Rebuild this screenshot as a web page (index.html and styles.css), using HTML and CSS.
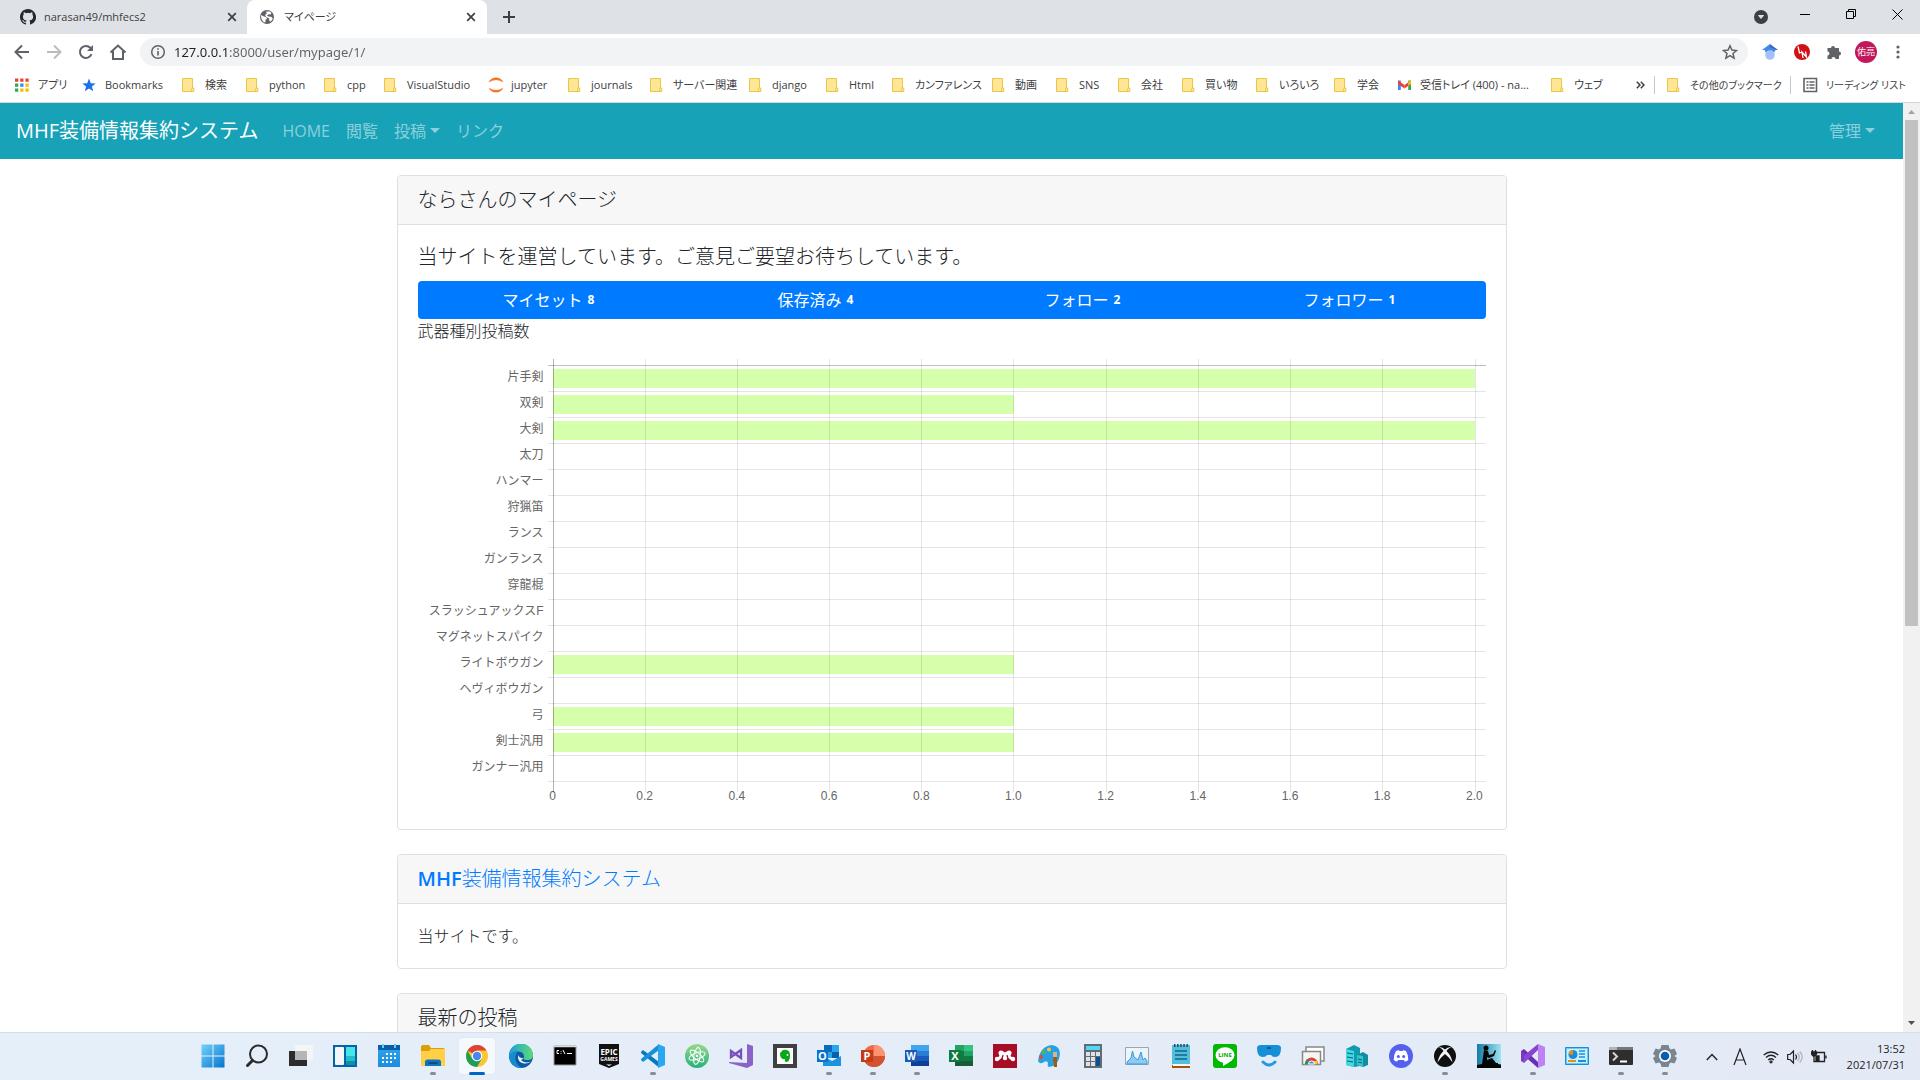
FILE: index.html
```html
<!DOCTYPE html>
<html lang="ja">
<head>
<meta charset="utf-8">
<title>マイページ</title>
<link rel="stylesheet" href="styles.css">
</head>
<body>
<svg class="defs" aria-hidden="true">
  <defs>
    <symbol id="folder" viewBox="0 0 16 16"><path d="M.5 1.500h10v9.500h1.300v3.500H.5z" fill="#ffe694" stroke="#e8c64a"/><path d="M9.500 14.500v-2q0-1.500 1.200-1.500" fill="none" stroke="#e8c64a"/></symbol>
    <symbol id="close" viewBox="0 0 10 10"><path d="M1.200 1.200l7.600 7.600M8.800 1.200L1.200 8.800" stroke="#3c4043" stroke-width="1.700"/></symbol>
    <linearGradient id="blue" x2="1" y2="1"><stop stop-color="#6fd3fb"/><stop offset="1" stop-color="#0873cf"/></linearGradient>
    <linearGradient id="sky" x2="0" y2="1"><stop stop-color="#2fa6ec"/><stop offset="1" stop-color="#1a8ddd"/></linearGradient>
    <linearGradient id="edge" x2="1" y2="0"><stop stop-color="#1b9de2"/><stop offset="1" stop-color="#5fdc6e"/></linearGradient>
    <linearGradient id="kindle" x2="1"><stop stop-color="#167ba6"/><stop offset="1" stop-color="#9fe3f4"/></linearGradient>
    <linearGradient id="atom" x2="0" y2="1"><stop stop-color="#9bd88c"/><stop offset="1" stop-color="#25b07a"/></linearGradient>
  </defs>
</svg>

<header class="browser">
  <div class="tabs">
    <div class="tab">
      <svg width="16" height="16" viewBox="0 0 16 16"><path fill="#24292e" d="M8 0C3.580 0 0 3.580 0 8c0 3.540 2.290 6.530 5.470 7.590.4.070.55-.17.55-.38v-1.490c-2.010.37-2.530-.49-2.690-.94-.09-.23-.48-.94-.82-1.130-.28-.15-.68-.52-.01-.53.63-.01 1.080.58 1.230.82.72 1.210 1.870.87 2.330.66.07-.52.28-.87.51-1.070-1.780-.2-3.640-.89-3.640-3.950 0-.87.31-1.590.82-2.150-.08-.2-.36-1.020.08-2.120 0 0 .67-.21 2.200.82a7.600 7.600 0 0 1 4 0c1.530-1.040 2.200-.82 2.200-.82.44 1.100.16 1.920.08 2.120.51.56.82 1.270.82 2.150 0 3.070-1.870 3.750-3.650 3.950.29.25.54.73.54 1.480v2.200c0 .21.15.46.55.38A8 8 0 0 0 8 0z"/></svg>
      <span class="tab-title">narasan49/mhfecs2</span>
      <button class="tab-close" aria-label="タブを閉じる"><svg width="10" height="10"><use href="#close"/></svg></button>
    </div>
    <div class="tab active">
      <svg width="14" height="14" viewBox="0 0 14 14"><circle cx="7" cy="7" r="7" fill="#5f6368"/><path d="M1 5l3 1.500 2 .5 1 1.500-1.500 1.500V12L4 12.500Q.8 10 1 5zM6 1.500h4l1.500 1.500-1 1.500-2-.3-1.500 1.300 1.500 1 2.500.3 1.800 1.500-.6 1.500-1.700 2-1.500-1.500.3-1.800-3-1.500L5 5l1.800-1.500z" fill="#fff"/></svg>
      <span class="tab-title">マイページ</span>
      <button class="tab-close" aria-label="タブを閉じる"><svg width="10" height="10"><use href="#close"/></svg></button>
    </div>
    <button class="new-tab" aria-label="新しいタブ"><svg width="12" height="12" viewBox="0 0 12 12"><path d="M6 0v12M0 6h12" stroke="#3c4043" stroke-width="2"/></svg></button>
    <div class="window-controls">
      <button class="search-tabs" aria-label="タブを検索"><svg width="14" height="14" viewBox="0 0 14 14"><circle cx="7" cy="7" r="7" fill="#3c4043"/><path d="M4.500 5.500h5L7 8.500z" fill="#dee1e6" stroke="#dee1e6"/></svg></button>
      <button aria-label="最小化"><svg width="10" height="10" viewBox="0 0 10 10"><path d="M0 5.500h10" stroke="#000"/></svg></button>
      <button aria-label="元に戻す"><svg width="10" height="10" viewBox="0 0 10 10" fill="none" stroke="#000"><path d="M.5 2.500h7v7h-7zM2.500 2.500v-2h7v7h-2"/></svg></button>
      <button aria-label="閉じる"><svg width="11" height="11" viewBox="0 0 11 11"><path d="M.5.5l10 10M10.500.5l-10 10" stroke="#000"/></svg></button>
    </div>
  </div>

  <div class="toolbar">
    <button aria-label="戻る"><svg width="16" height="16" viewBox="0 0 16 16" fill="none" stroke="#5f6368" stroke-width="2"><path d="M15 8H2.500M8 1.500L1.500 8 8 14.500"/></svg></button>
    <button aria-label="進む"><svg width="16" height="16" viewBox="0 0 16 16" fill="none" stroke="#babcbe" stroke-width="2"><path d="M1 8h12.500M8 1.500L14.500 8 8 14.500"/></svg></button>
    <button aria-label="再読み込み"><svg width="16" height="16" viewBox="0 0 16 16"><path d="M13.500 10.200A6 6 0 1 1 12.300 3.800L14 5.500" fill="none" stroke="#5f6368" stroke-width="2"/><path d="M15 1v6H9z" fill="#5f6368"/></svg></button>
    <button aria-label="ホーム"><svg width="18" height="16" viewBox="0 0 18 16"><path d="M1.500 8.500L9 1.500l7.500 7M4 7v8h10V7" fill="none" stroke="#5f6368" stroke-width="2"/></svg></button>
    <div class="omnibox">
      <svg width="16" height="16" viewBox="0 0 16 16"><circle cx="8" cy="8" r="6.300" fill="none" stroke="#5f6368" stroke-width="1.500"/><path d="M8 7v4.500M8 4.200v1.600" stroke="#5f6368" stroke-width="1.600"/></svg>
      <input class="url" type="text" aria-label="アドレス" value="127.0.0.1:8000/user/mypage/1/">
      <button aria-label="ブックマークに追加"><svg width="16" height="16" viewBox="0 0 16 16"><path d="M8 1.800l1.900 4.300 4.600.4-3.500 3 1.100 4.600L8 11.700l-4.100 2.400L5 9.500l-3.500-3 4.600-.4z" fill="none" stroke="#5f6368" stroke-width="1.500"/></svg></button>
    </div>
    <div class="extensions">
      <button aria-label="Google Scholar"><svg width="16" height="16" viewBox="0 0 16 16"><path d="M8 0L0 6h2.500L8 5z" fill="#4285f4"/><path d="M8 0l8 6h-2.500L8 5z" fill="#356ac3"/><path d="M2.500 6Q8 1 13.500 6L12 9H4z" fill="#4a86e8"/><circle cx="8" cy="11" r="4.800" fill="#a0c3ff"/></svg></button>
      <button aria-label="拡張機能 LN"><svg width="16" height="16" viewBox="0 0 16 16"><circle cx="8" cy="8" r="8" fill="#d01216"/><path d="M4 2.500L5.500 9 8.500 8M9 14L8 8l4.500 5-1-5.500" fill="none" stroke="#fff" stroke-width="1.300"/></svg></button>
      <button aria-label="拡張機能"><svg width="16" height="16" viewBox="0 0 16 16"><path d="M1.500 4H5a2 2 0 1 1 4 0h4v3.500a2 2 0 1 1 0 4V15H9.500a2 2 0 0 0-4 0h-4v-3.500a2 2 0 0 0 0-4z" fill="#5f6368"/></svg></button>
      <button class="avatar" aria-label="プロフィール"><span>佑亮</span></button>
      <button aria-label="メニュー"><svg width="4" height="14" viewBox="0 0 4 14" fill="#5f6368"><circle cx="2" cy="2" r="1.600"/><circle cx="2" cy="7" r="1.600"/><circle cx="2" cy="12" r="1.600"/></svg></button>
    </div>
  </div>

  <nav class="bookmarks" aria-label="ブックマーク">
    <div class="bookmark-list">
      <a href="#"><svg viewBox="0 0 16 16"><path d="M0 1.500h3.300v3.300H0zM5.200 1.500h3.300v3.300H5.200zM10.400 1.500h3.300v3.300h-3.300z" fill="#ea4335"/><path d="M0 6.500h3.300v3.300H0zM0 11.500h3.300v3.300H0z" fill="#34a853"/><path d="M5.200 6.500h3.300v3.300H5.200z" fill="#4285f4"/><path d="M10.400 6.500h3.300v3.300h-3.300zM5.200 11.500h3.300v3.300H5.200zM10.400 11.500h3.300v3.300h-3.300z" fill="#fbbc05"/></svg>アプリ</a>
      <a href="#"><svg viewBox="0 0 16 16"><path d="M7 1.500l1.800 4.700 4.900.2-3.800 3.100 1.300 4.800L7 11.600l-4.200 2.700 1.300-4.800L.3 6.400l4.900-.2z" fill="#1a73e8"/></svg>Bookmarks</a>
      <a href="#"><svg><use href="#folder"/></svg>検索</a>
      <a href="#"><svg><use href="#folder"/></svg>python</a>
      <a href="#"><svg><use href="#folder"/></svg>cpp</a>
      <a href="#"><svg><use href="#folder"/></svg>VisualStudio</a>
      <a href="#"><svg viewBox="0 0 16 16" fill="#f37726"><path d="M.5 5.500Q3 .5 8 .5t7.500 5Q12 3 8 3T.5 5.500zM.5 10.500Q4 13 8 13t7.500-2.500q-2.500 5-7.500 5t-7.500-5z"/></svg>jupyter</a>
      <a href="#"><svg><use href="#folder"/></svg>journals</a>
      <a href="#"><svg><use href="#folder"/></svg>サーバー関連</a>
      <a href="#"><svg><use href="#folder"/></svg>django</a>
      <a href="#"><svg><use href="#folder"/></svg>Html</a>
      <a href="#"><svg><use href="#folder"/></svg>カンファレンス</a>
      <a href="#"><svg><use href="#folder"/></svg>動画</a>
      <a href="#"><svg><use href="#folder"/></svg>SNS</a>
      <a href="#"><svg><use href="#folder"/></svg>会社</a>
      <a href="#"><svg><use href="#folder"/></svg>買い物</a>
      <a href="#"><svg><use href="#folder"/></svg>いろいろ</a>
      <a href="#"><svg><use href="#folder"/></svg>学会</a>
      <a href="#"><svg viewBox="0 0 16 16"><path d="M1 3.500h2.800V13H1z" fill="#4285f4"/><path d="M11.200 3.500H14V13h-2.800z" fill="#34a853"/><path d="M1 3.500L7.500 8v3.500L1 7z" fill="#ea4335"/><path d="M14 3.500L7.500 8v3.500L14 7z" fill="#ea4335"/><path d="M11.200 5V9L14 7V3.500z" fill="#fbbc05"/></svg>受信トレイ (400) - na...</a>
      <a href="#"><svg><use href="#folder"/></svg>ウェブ</a>
    </div>
    <div class="bookmark-end">
      <button class="more" aria-label="その他を表示"><svg width="9" height="8" viewBox="0 0 9 8"><path d="M.8.8L4 4 .8 7.200M4.800.8L8 4 4.800 7.200" fill="none" stroke="#3c4043" stroke-width="1.500"/></svg></button>
      <a href="#"><svg><use href="#folder"/></svg>その他のブックマーク</a>
      <a href="#"><svg viewBox="0 0 16 16"><path d="M1 1.500h12.500v13H1z" fill="none" stroke="#5f6368" stroke-width="1.600"/><path d="M3.500 5h2M3.500 8h2M3.500 11h2M6.500 5h5M6.500 8h5M6.500 11h5" stroke="#5f6368" stroke-width="1.400"/></svg>リーディング リスト</a>
    </div>
  </nav>
</header>

<div class="viewport">
  <div class="page">
    <nav class="navbar">
      <a class="brand" href="#">MHF装備情報集約システム</a>
      <a class="nav-link" href="#">HOME</a>
      <a class="nav-link" href="#">閲覧</a>
      <a class="nav-link caret" href="#">投稿</a>
      <a class="nav-link" href="#">リンク</a>
      <a class="nav-link caret admin" href="#">管理</a>
    </nav>
    <main class="container">
      <section class="card">
        <h5 class="card-header">ならさんのマイページ</h5>
        <div class="card-body">
          <h5 class="card-title">当サイトを運営しています。ご意見ご要望お待ちしています。</h5>
          <div class="btn-group">
            <button>マイセット <span class="badge">8</span></button>
            <button>保存済み <span class="badge">4</span></button>
            <button>フォロー <span class="badge">2</span></button>
            <button>フォロワー <span class="badge">1</span></button>
          </div>
          <div>武器種別投稿数</div>
          <div class="chart">
            <div class="labels">
              <span>片手剣</span><span>双剣</span><span>大剣</span><span>太刀</span><span>ハンマー</span><span>狩猟笛</span><span>ランス</span><span>ガンランス</span><span>穿龍棍</span><span>スラッシュアックスF</span><span>マグネットスパイク</span><span>ライトボウガン</span><span>ヘヴィボウガン</span><span>弓</span><span>剣士汎用</span><span>ガンナー汎用</span>
            </div>
            <div class="plot">
              <div class="row"><div class="track"><div class="bar" style="width:100%"></div></div></div>
              <div class="row"><div class="track"><div class="bar" style="width:50%"></div></div></div>
              <div class="row"><div class="track"><div class="bar" style="width:100%"></div></div></div>
              <div class="row"></div>
              <div class="row"></div>
              <div class="row"></div>
              <div class="row"></div>
              <div class="row"></div>
              <div class="row"></div>
              <div class="row"></div>
              <div class="row"></div>
              <div class="row"><div class="track"><div class="bar" style="width:50%"></div></div></div>
              <div class="row"></div>
              <div class="row"><div class="track"><div class="bar" style="width:50%"></div></div></div>
              <div class="row"><div class="track"><div class="bar" style="width:50%"></div></div></div>
              <div class="row"></div>
              <div class="gridlines"><i></i><i></i><i></i><i></i><i></i><i></i><i></i><i></i><i></i><i></i></div>
            </div>
            <div class="scale"><span>0</span><span>0.2</span><span>0.4</span><span>0.6</span><span>0.8</span><span>1.0</span><span>1.2</span><span>1.4</span><span>1.6</span><span>1.8</span><span>2.0</span></div>
          </div>
        </div>
      </section>
      <section class="card">
        <h5 class="card-header"><a href="#"><b>MHF</b>装備情報集約システム</a></h5>
        <div class="card-body">当サイトです。</div>
      </section>
      <section class="card">
        <h5 class="card-header">最新の投稿</h5>
        <div class="card-body"></div>
      </section>
    </main>
  </div>
  <div class="scrollbar">
    <svg width="17" height="17" viewBox="0 0 17 17"><path d="M5 11l3.500-4 3.500 4z" fill="#a3a3a3"/></svg>
    <div class="scroll-track"><div class="thumb"></div></div>
    <svg width="17" height="17" viewBox="0 0 17 17"><path d="M5 6l3.500 4L12 6z" fill="#505050"/></svg>
  </div>
</div>

<footer class="taskbar">
  <div class="apps">
    <button aria-label="スタート"><svg viewBox="0 0 24 24"><path d="M.5.5h11v11H.5zM12.500.5h11v11h-11zM.5 12.500h11v11H.5zM12.500 12.500h11v11h-11z" fill="url(#blue)"/></svg></button>
    <button aria-label="検索"><svg viewBox="0 0 24 24" fill="none" stroke="#2b2b2b"><circle cx="13.500" cy="10" r="8.500" stroke-width="2"/><path d="M7.500 16.500l-5 5" stroke-width="3" stroke-linecap="round"/></svg></button>
    <button aria-label="タスクビュー"><svg viewBox="0 0 24 24"><path d="M0 7h18v15H0z" fill="#2c2c2c"/><path d="M6 1h18v15H6z" fill="#f5f5f5"/><path d="M6 7h12v9H6z" fill="#b5b5b5"/></svg></button>
    <button aria-label="ウィジェット"><svg viewBox="0 0 24 24"><path d="M0 1h24v22H0z" fill="#0763a8"/><rect x="2" y="3" width="9" height="18" rx="1" fill="#f4f7fa"/><path d="M13 3h9v9h-9z" fill="#44e6e8"/><path d="M13 12h9v5h-9z" fill="#22bccb"/><path d="M13 17h9v4h-9z" fill="#108fa5"/></svg></button>
    <button aria-label="カレンダー"><svg viewBox="0 0 24 24"><path d="M1 2h22v21H1z" fill="url(#sky)"/><path d="M1 1h22v5H1z" fill="#0b5caa"/><path d="M5 0h2v4H5zM17 0h2v4h-2z" fill="#55d5f5"/><path d="M9 10h11M5 14h15M5 18h11" stroke="#fff" stroke-width="2" stroke-dasharray="2"/></svg></button>
    <button class="running" aria-label="エクスプローラー"><svg viewBox="0 0 24 24"><path d="M0 3q0-2 2-2h6l2 3h12q2 0 2 2v14H0z" fill="#dca000"/><path d="M0 7h8l2-2h14v17H0z" fill="#ffcf48"/><path d="M4 22v-4q0-2.500 2.500-2.500h11Q20 15.500 20 18v4z" fill="#1172bd"/><path d="M7.500 19h9" stroke="#0b4e84" stroke-width="2"/></svg></button>
    <button class="current" aria-label="Google Chrome"><svg viewBox="0 0 24 24"><circle cx="12" cy="12" r="11" fill="#fbc62f"/><path d="M12 12L2.500 6.500A11 11 0 0 1 21.500 6.500H12z" fill="#dc4437"/><path d="M2.500 6.500A11 11 0 0 0 12 23l4.800-8.300L7.300 14.700z" fill="#1d9e58"/><circle cx="12" cy="12" r="5.300" fill="#fff"/><circle cx="12" cy="12" r="4.200" fill="#4a86ee"/></svg></button>
    <button aria-label="Microsoft Edge"><svg viewBox="0 0 24 24"><circle cx="12" cy="12" r="12" fill="#0d59a4"/><path d="M0 12A12 12 0 0 1 24 11q0 5-5.500 5-4 0-4-1.500Q16 11 13 8.500 6 5.500 0 12z" fill="url(#edge)"/><path d="M0 12q4-5.500 9-4.500-3 3-2.500 7.500.5 6 6.500 9Q1 24 0 12z" fill="#168bd0"/><path d="M14.500 14.500Q10 14 9 11q-1 7 6 8.500 4 .5 7-2Q15 20 12 16z" fill="#eaf5fb"/></svg></button>
    <button aria-label="コマンドプロンプト"><svg viewBox="0 0 24 24"><path d="M1 2h22v19H1z" fill="#000" stroke="#9a9a9a"/><path d="M1 2.500h22" stroke="#ddd" stroke-width="1.500"/><path d="M6 6.500H4v3h2M8 7v.8M8 9v.8M10 6l2 4M14 9.500h5" fill="none" stroke="#fff"/></svg></button>
    <button aria-label="Epic Games"><svg viewBox="0 0 24 24"><path d="M2 0h20v20l-10 4-10-4z" fill="#111"/><text x="12" y="11" text-anchor="middle" class="icon-text" font-size="8" fill="#fff">EPIC</text><text x="12" y="17" text-anchor="middle" class="icon-text" font-size="5" fill="#fff">GAMES</text><path d="M9 20.500h6l-3 1.500z" fill="#fff"/></svg></button>
    <button class="running" aria-label="Visual Studio Code"><svg viewBox="0 0 24 24"><path d="M0 8l2-2 16 12v5.500L0 9z" fill="#0879be"/><path d="M0 16l2 2L18 6V0L0 15z" fill="#1492d8"/><path d="M17 0l7 3v18l-7 3z" fill="#2aa8ef"/></svg></button>
    <button aria-label="Atom"><svg viewBox="0 0 24 24"><circle cx="12" cy="12" r="12" fill="url(#atom)"/><g fill="none" stroke="#f3fff8" stroke-width="1.100"><ellipse cx="12" cy="12" rx="3.200" ry="8.500" transform="rotate(10 12 12)"/><ellipse cx="12" cy="12" rx="3.200" ry="8.500" transform="rotate(70 12 12)"/><ellipse cx="12" cy="12" rx="3.200" ry="8.500" transform="rotate(130 12 12)"/></g><circle cx="12" cy="12" r="1.300" fill="#fff"/></svg></button>
    <button aria-label="Visual Studio Installer"><svg viewBox="0 0 24 24"><path d="M18 0l6 2v19l-6 3-18-5v-1l18 1z" fill="#8a62c8"/><path d="M2 7l10 7V6L2 13z" fill="none" stroke="#7a4ebe" stroke-width="2.300"/></svg></button>
    <button aria-label="Evernote"><svg viewBox="0 0 24 24"><path d="M0 0h24v24H0z" fill="#404040"/><path d="M4 4h16v16H4z" fill="#fff"/><path d="M7 9l3-3q7-1 7 5t-3 7q-3 0-2-3-5 1-5-6z" fill="#0aa817"/><circle cx="14.500" cy="11" r=".9" fill="#fff"/></svg></button>
    <button class="running" aria-label="Outlook"><svg viewBox="0 0 24 24"><path d="M7 1h15v13H7z" fill="#28a8ea"/><path d="M7 1h8v7H7z" fill="#0d6ab8"/><path d="M15 8h7v6h-7z" fill="#0a5eaa"/><path d="M6 12l9 5 9-5v10H6z" fill="#1b94df"/><path d="M0 6h11v12H0z" fill="#0871c9"/><text x="5.500" y="16" text-anchor="middle" class="icon-text" font-size="11" fill="#fff">O</text></svg></button>
    <button class="running" aria-label="PowerPoint"><svg viewBox="0 0 24 24"><circle cx="13" cy="12" r="11" fill="#ec6b48"/><path d="M13 1a11 11 0 0 1 11 11H13z" fill="#ff9270"/><path d="M2 12h22a11 11 0 0 1-22 0z" fill="#d35230"/><path d="M0 6h12v12H0z" fill="#c13b1b"/><text x="6" y="16" text-anchor="middle" class="icon-text" font-size="11" fill="#fff">P</text></svg></button>
    <button class="running" aria-label="Word"><svg viewBox="0 0 24 24"><path d="M6 1h18v6H6z" fill="#41a5ee"/><path d="M6 7h18v5H6z" fill="#2b7cd3"/><path d="M6 12h18v5H6z" fill="#185abd"/><path d="M6 17h18v5H6z" fill="#103f91"/><path d="M0 6h12v12H0z" fill="#1a58ba"/><text x="6" y="16" text-anchor="middle" class="icon-text" font-size="10" fill="#fff">W</text></svg></button>
    <button aria-label="Excel"><svg viewBox="0 0 24 24"><path d="M6 1h9v6H6z" fill="#21a366"/><path d="M15 1h9v6h-9z" fill="#33c481"/><path d="M6 7h9v10H6z" fill="#107c41"/><path d="M15 7h9v5h-9z" fill="#21a366"/><path d="M15 12h9v5h-9z" fill="#107c41"/><path d="M6 17h18v5H6z" fill="#185c37"/><path d="M0 6h12v12H0z" fill="#0f7a40"/><text x="6" y="16" text-anchor="middle" class="icon-text" font-size="11" fill="#fff">X</text></svg></button>
    <button aria-label="Mendeley"><svg viewBox="0 0 24 24"><path d="M0 0h24v24H0z" fill="#a70d26"/><path d="M4 15q5-1 3.500-6 3-1 4.500 2 1.500-3 4.500-2-1.500 5 3.500 6" fill="none" stroke="#fff" stroke-width="3"/><circle cx="8" cy="9" r="2.500" fill="#fff"/><circle cx="16" cy="9" r="2.500" fill="#fff"/><circle cx="4" cy="15" r="2.200" fill="#fff"/><circle cx="12" cy="14" r="2.200" fill="#fff"/><circle cx="20" cy="15" r="2.200" fill="#fff"/></svg></button>
    <button aria-label="ペイント"><svg viewBox="0 0 24 24"><path d="M1 17Q3 2 15 1q8 1 8 9-1 12-11 13-2-1-1-4-1-3-4-1-4 3-6-1z" fill="#28a1e4"/><circle cx="12" cy="5.500" r="2" fill="#ffc42b"/><circle cx="6.500" cy="8" r="2" fill="#57b64b"/><circle cx="4" cy="13" r="2" fill="#e04b35"/><path d="M16 8h4v6h-4z" fill="#d9b48a"/><path d="M16 13h4v10h-3z" fill="#9e5b18"/></svg></button>
    <button aria-label="電卓"><svg viewBox="0 0 24 24"><path d="M3 0h18v24H3z" fill="#646b73"/><path d="M5 2h14v4H5z" fill="#4fd7f8"/><path d="M5 8h4v4H5zM10 8h4v4h-4zM15 8h4v4h-4zM5 13h4v4H5zM10 13h4v4h-4zM5 18h4v4H5zM10 18h4v4h-4z" fill="#dee1e5"/><path d="M15 13h4v9h-4z" fill="#0d4f94"/></svg></button>
    <button aria-label="パフォーマンスモニター"><svg viewBox="0 0 24 24"><path d="M.5 3.500h23v17H.5z" fill="#eaf5fc" stroke="#9ba6ae"/><path d="M2 18l4-4 1.500-7L9 13l4 3 3-8 2 8 2-2 2 3v3H2z" fill="#8ecbf4" stroke="#3899df"/></svg></button>
    <button aria-label="メモ帳"><svg viewBox="0 0 24 24"><path d="M3 1h18v19H3z" fill="#53bedc"/><path d="M3 21h18v3H3z" fill="#a95208"/><path d="M4 20.500h17v1.500H4z" fill="#fff"/><path d="M5 1.500h14" stroke="#174e6c" stroke-width="3" stroke-dasharray="1.500 1.600"/><path d="M6 7h12M6 11h12M6 15h12" stroke="#11668a" stroke-width="1.500"/></svg></button>
    <button aria-label="LINE"><svg viewBox="0 0 24 24"><rect width="24" height="24" rx="3" fill="#00b900"/><ellipse cx="12" cy="11" rx="9.500" ry="7.800" fill="#fff"/><path d="M10 17v5q6-3 9-6z" fill="#fff"/><text x="12" y="13" text-anchor="middle" class="icon-text" font-size="6" fill="#00a900">LINE</text></svg></button>
    <button aria-label="Mixed Reality ポータル"><svg viewBox="0 0 24 24"><path d="M0 4q0-3 4-3h16q4 0 4 3 0 9-6 9-3 0-4-2h-4q-1 2-4 2-6 0-6-9z" fill="#168fd6"/><path d="M10 3h4v2h-4z" fill="#065da8"/><path d="M6 18q6 6 12 0" fill="none" stroke="#2399e3" stroke-width="3" stroke-linecap="round"/></svg></button>
    <button aria-label="Chrome リモート デスクトップ"><svg viewBox="0 0 24 24"><path d="M5 3h18v14H5z" fill="#fff" stroke="#888" stroke-width="1.500"/><path d="M1.500 7.500h18v13h-18z" fill="#f5f5f5" stroke="#888" stroke-width="1.500"/><path d="M4 20a6.500 6.500 0 0 1 13 0z" fill="#dc4437"/><path d="M4 20a6.500 6.500 0 0 1 2-5l4 5z" fill="#219c56"/><path d="M11 17h5.500v3H11z" fill="#fbc62f"/><path d="M7.500 20a3 3 0 0 1 6 0z" fill="#4285f4" stroke="#fff"/></svg></button>
    <button aria-label="サーバー"><svg viewBox="0 0 24 24"><path d="M1 5l8-4 6 3v18l-6 1-8-2z" fill="#139aaf"/><path d="M1 5l8 2v16l-8-2z" fill="#42d8e3"/><path d="M12 11l6-3 5 3v10l-5 2-6-2z" fill="#118ca5"/><path d="M12 11l6 1v11l-6-2z" fill="#36c4d1"/><path d="M2 9l6 1M2 13l6 1M2 17l6 1M13 15l4 1M13 18l4 1" stroke="#075f78"/></svg></button>
    <button aria-label="Discord"><svg viewBox="0 0 24 24"><circle cx="12" cy="12" r="12" fill="#5560ef"/><path d="M7 7q2-1 3-.8l.5.800h3l.5-.8q1-.2 3 .8 2.500 4 2.300 9-2 1.500-3.500 1.500l-1-1.500H9.200l-1 1.500q-1.500 0-3.500-1.500Q4.500 11 7 7z" fill="#fff"/><circle cx="9.300" cy="12.500" r="1.500" fill="#5560ef"/><circle cx="14.700" cy="12.500" r="1.500" fill="#5560ef"/></svg></button>
    <button class="running" aria-label="Xbox"><svg viewBox="0 0 24 24"><circle cx="12" cy="12" r="11" fill="#101010"/><path d="M5.500 3.500q3-1 6.500 2 3.500-3 6.500-2-3 0-5 3.500 5 5 6 11.500Q16 13 12 10q-4 3-7.500 8.500 1-6.500 6-11.500-2-3.500-5-3.500z" fill="#f4f6fa"/></svg></button>
    <button aria-label="Kindle"><svg viewBox="0 0 24 24"><path d="M0 0h24v24H0z" fill="url(#kindle)"/><circle cx="9" cy="4" r="2.500" fill="#050505"/><path d="M7 6l4 1 1 4 4-1 2-4 1 1-2 5-5 2-2-1v3l5-2 4 5h2v1l4 .5V24H0v-3l5-1z" fill="#050505"/></svg></button>
    <button class="running" aria-label="Visual Studio"><svg viewBox="0 0 24 24"><path d="M0 7l3-2 14 13v6L0 9z" fill="#6b2fb5"/><path d="M0 17l3 2L17 6V0L0 14z" fill="#8a45cf"/><path d="M0 7l3 1v8l-3 1z" fill="#7a3bc4"/><path d="M17 0l7 3v18l-7 3z" fill="#bd83f4"/></svg></button>
    <button aria-label="コントロールパネル"><svg viewBox="0 0 24 24"><path d="M.5 3.500h23v17H.5z" fill="#64cdf6" stroke="#178fd8"/><path d="M2 5h20v14H2z" fill="#c9eefd"/><circle cx="8" cy="10.500" r="4.500" fill="#168ddb"/><path d="M8 10.500V6a4.500 4.500 0 0 0-4.500 4.500z" fill="#ee8b15"/><path d="M14 7h6M14 10h6M14 13h6" stroke="#258fd4" stroke-width="1.500"/><path d="M3 17h8" stroke="#ee8b15" stroke-width="2"/><path d="M13 17h8" stroke="#178fd8" stroke-width="2"/></svg></button>
    <button class="running" aria-label="ターミナル"><svg viewBox="0 0 24 24"><rect y="3" width="24" height="18" rx="1" fill="#2e2e2e"/><path d="M0 3h8v3H0z" fill="#b2b2b2"/><path d="M8 3h16v3H8z" fill="#777"/><path d="M4 8.500l4 4-4 4" fill="none" stroke="#d4d4d4" stroke-width="2"/><path d="M11 17.500h7" stroke="#fff" stroke-width="2"/></svg></button>
    <button class="running" aria-label="設定"><svg viewBox="0 0 24 24"><path d="M8.500 1h7l1 3.500 1.500 1 3.500-1L24 10l-2.500 2 2.500 2-2.500 5.500-3.500-1-1.500 1-1 3.500h-7l-1-3.500-1.500-1-3.500 1L0 14l2.500-2L0 10l2.500-5.500 3.500 1 1.500-1z" fill="#7b858f"/><circle cx="12" cy="12" r="6" fill="#fff"/><circle cx="12" cy="12" r="4.300" fill="#075eaf"/></svg></button>
  </div>
  <div class="tray">
    <svg width="12" height="8" viewBox="0 0 12 8"><path d="M.8 7L6 1.500 11.200 7" fill="none" stroke="#222" stroke-width="1.400"/></svg>
    <svg width="14" height="18" viewBox="0 0 14 18"><path d="M1 17L7 1l6 16M3 12h8" fill="none" stroke="#222" stroke-width="1.200"/></svg>
    <svg width="16" height="16" viewBox="0 0 16 16" fill="none" stroke="#222" stroke-width="1.300"><path d="M.7 6q7.300-6 14.600 0M3 8.500q5-4.500 10 0M5.200 11q2.800-2.500 5.600 0"/><circle cx="8" cy="12.800" r="1"/></svg>
    <svg width="16" height="16" viewBox="0 0 16 16" fill="none" stroke="#222" stroke-width="1.200"><path d="M.7 5.500H3L6.500 2v12L3 10.500H.7zM8.500 5.500q2 2.500 0 5"/><path d="M10.500 4q3.500 4 0 8M12.700 2.500q5 5.500 0 11" stroke="#aab0ba"/></svg>
    <svg width="16" height="16" viewBox="0 0 16 16" fill="none" stroke="#222" stroke-width="1.300"><path d="M6 3.500h7.500v9H3v-3M15 6.500v3M3 6v4"/><path d="M1.500 1v2M4.500 1v2" /><path d="M.5 3h5v2q-1 2-2.500 2T.5 5z" fill="#222"/><path d="M5 7h3v5H5z" fill="#222"/></svg>
    <time class="clock" datetime="2021-07-31T13:52">13:52<br>2021/07/31</time>
  </div>
</footer>
</body>
</html>
```
FILE: styles.css
```css
* { box-sizing: border-box; }

body {
  margin: 0;
  height: 100vh;
  display: flex;
  flex-direction: column;
  overflow: hidden;
  font-family: "Open Sans", "Noto Sans CJK JP", sans-serif;
  font-size: 16px;
  line-height: 24px;
  color: #212529;
  background: #fff;
}

.defs { position: absolute; width: 0; height: 0; }
svg { display: block; flex: none; }
a { color: inherit; text-decoration: none; }
button {
  padding: 0;
  border: 0;
  background: none;
  color: inherit;
  font: inherit;
  display: flex;
  align-items: center;
  justify-content: center;
}

/* Browser frame */
.browser { flex: none; font-size: 12px; line-height: 16px; color: #3c4043; }

.tabs { display: flex; height: 34px; background: #dee1e6; }
.tab {
  display: flex;
  align-items: center;
  gap: 8px;
  width: 240px;
  padding: 0 10px 0 13px;
  font-size: 11px;
  font-feature-settings: "palt";
}
.tab:first-child { width: 247px; padding: 0 9px 0 20px; }
.tab.active { background: #fff; border-radius: 8px 8px 0 0; gap: 10px; }
.tab-title { flex: 1; white-space: nowrap; }
.tab-close { width: 12px; height: 16px; }
.new-tab { width: 44px; }
.window-controls { display: flex; margin-left: auto; height: 28px; }
.window-controls button { width: 46px; }
.window-controls .search-tabs { width: 42px; height: 34px; }

.toolbar { display: flex; align-items: center; height: 36px; padding: 0 6px; }
.toolbar button { width: 32px; height: 28px; flex: none; }
.omnibox {
  flex: 1;
  display: flex;
  align-items: center;
  gap: 8px;
  height: 28px;
  margin: 0 6px;
  padding: 0 2px 0 10px;
  border-radius: 14px;
  background: #f1f3f4;
}
.url {
  flex: 1;
  height: 24px;
  padding: 0;
  border: 0;
  outline: 0;
  font: 13px/20px "Noto Sans", "Noto Sans CJK JP", sans-serif;
  color: #5f6368;
  background: linear-gradient(90deg, #202124 56px, #5f6368 56px);
  -webkit-background-clip: text;
  background-clip: text;
  -webkit-text-fill-color: transparent;
}
.extensions { display: flex; }
.avatar span {
  width: 22px;
  height: 22px;
  border-radius: 50%;
  background: #c2185b;
  color: #fff;
  font-size: 9px;
  line-height: 22px;
  text-align: center;
}

.bookmarks {
  display: flex;
  height: 33px;
  padding: 0 0 3px 15px;
  border-bottom: 1px solid #d5d8dc;
  font-size: 11px;
  font-feature-settings: "palt";
}
.bookmarks a { display: flex; align-items: center; gap: 7px; white-space: nowrap; }
.bookmarks a svg { width: 16px; height: 16px; }
.bookmark-list {
  display: grid;
  grid-template-columns:
    67px 100px 64px 78px 60px 104px 80px 82px 99px 77px
    66px 100px 64px 62px 64px 74px 78px 63px 154px 64px;
}
.bookmark-end { display: flex; align-items: center; margin-left: auto; font-size: 10px; }
.bookmark-end a { height: 18px; padding-left: 12px; border-left: 1px solid #c4c7cb; width: 136px; }
.bookmark-end a:last-child { width: 130px; }
.more { width: 28px; height: 20px; }

/* Page */
.viewport { flex: 1; min-height: 0; display: flex; overflow: hidden; }
.page { flex: 1; min-width: 0; overflow: hidden; font-weight: 300; }

.navbar {
  display: flex;
  align-items: center;
  height: 56px;
  padding: 0 20px 0 16px;
  background: #17a2b8;
  font-weight: 400;
}
.brand { margin-right: 16px; font-size: 20px; color: #fff; }
.nav-link { padding: 8px; color: rgba(255, 255, 255, .5); white-space: nowrap; }
.caret::after {
  content: "";
  display: inline-block;
  margin-left: 4px;
  vertical-align: 4px;
  border: 5px solid transparent;
  border-top-color: currentColor;
  border-bottom: 0;
}
.admin { margin-left: auto; }

.container { max-width: 1110px; margin: 16px auto 0; }
.card { margin-bottom: 24px; border: 1px solid #dfdfdf; border-radius: 4px; background: #fff; }
h5 { margin: 0; font-size: 20px; line-height: 24px; font-weight: 300; }
.card-header { padding: 12px 20px; border-bottom: 1px solid #dfdfdf; background: #f7f7f7; border-radius: 3px 3px 0 0; }
.card-header a { color: #007bff; }
.card-header b { font-weight: 600; }
.card-body { padding: 20px; min-height: 64px; }
.card-title { margin-bottom: 12px; }

.btn-group {
  display: grid;
  grid-template-columns: repeat(4, 1fr);
  height: 38px;
  border-radius: 4px;
  background: #007bff;
  color: #fff;
  font-weight: 400;
}
.badge { padding: 0 5px; font-size: 12px; font-weight: 700; }

/* Horizontal bar chart */
.chart {
  display: grid;
  grid-template-columns: 130px 1fr;
  padding: 16px 0 5px;
  color: #666;
  font-family: "Liberation Sans", "Noto Sans CJK JP", sans-serif;
  font-size: 12px;
  font-weight: 400;
}
.labels { padding: 6px 4px 0 0; display: grid; grid-auto-rows: 26px; line-height: 24px; text-align: right; }
.labels span { white-space: nowrap; }
.plot { position: relative; padding-top: 6px; margin-bottom: 10px; }
.row { height: 26px; padding: 3px 11px 0 5px; border-bottom: 1px solid #e5e5e5; }
.row:first-child { border-top: 1px solid #bfbfbf; height: 27px; }
.bar { height: 19px; background: #d6ffac; }
.gridlines {
  position: absolute;
  inset: 0 10px -10px 5px;
  display: grid;
  grid-template-columns: repeat(10, 1fr);
  border-right: 1px solid rgba(0, 0, 0, .1);
}
.gridlines i { border-left: 1px solid rgba(0, 0, 0, .1); }
.gridlines i:first-child { border-color: rgba(0, 0, 0, .3); }
.scale {
  grid-column: 2;
  display: flex;
  justify-content: space-between;
  margin: -4px -5px 0 -11px;
  line-height: 16px;
}
.scale span { width: 32px; text-align: center; }

.scrollbar { flex: none; width: 17px; display: flex; flex-direction: column; background: #f1f1f1; }
.scroll-track { flex: 1; padding: 0 2px; }
.thumb { height: 56.5%; background: #c1c1c1; }

/* Taskbar */
.taskbar {
  flex: none;
  display: flex;
  height: 48px;
  padding: 0 15px 0 191px;
  border-top: 1px solid #d3dfec;
  background: linear-gradient(90deg, #e5eff9, #e3eaf6);
}
.apps { display: flex; }
.apps button { position: relative; width: 44px; height: 46px; }
.apps svg { width: 24px; height: 24px; }
.icon-text { font-family: "Open Sans", sans-serif; font-weight: 700; }
.apps .current::before {
  content: "";
  position: absolute;
  inset: 4px 3px;
  border-radius: 4px;
  background: #f5f9fd;
  border: 1px solid #e3e9f1;
}
.apps .current svg { position: relative; }
.running::after,
.current::after {
  content: "";
  position: absolute;
  left: 19px;
  bottom: 4px;
  width: 6px;
  height: 3px;
  border-radius: 2px;
  background: #878d94;
}
.apps .current::after { left: 14px; width: 16px; background: #0067c0; }

.tray { display: flex; align-items: center; gap: 8px; margin-left: auto; }
.tray svg:first-child { margin-right: 7px; }
.tray svg:nth-child(2) { margin-right: 8px; }
.clock { margin-left: 12px; font-size: 11px; line-height: 16px; text-align: right; color: #222; }
```
